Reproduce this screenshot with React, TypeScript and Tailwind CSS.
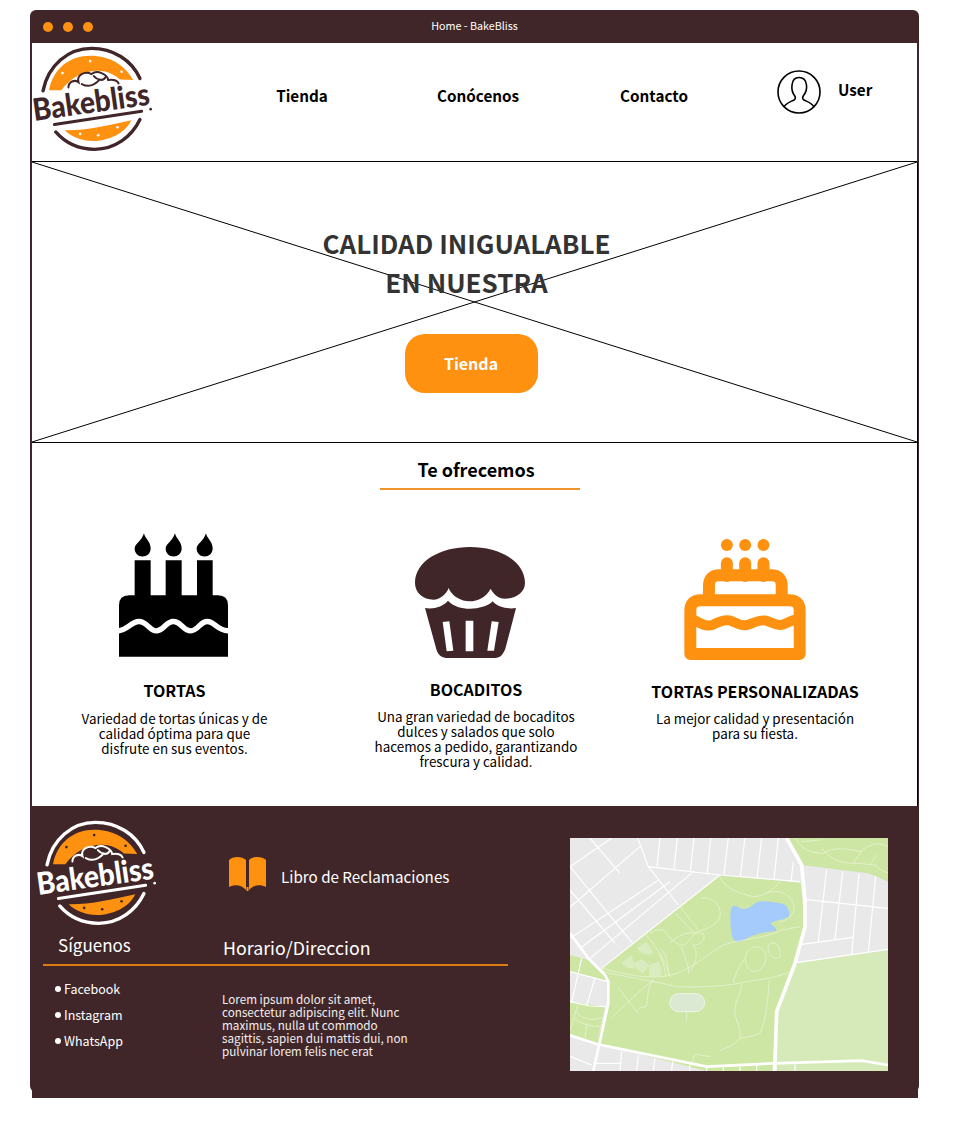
const brown = "#412629";
const orange = "#ff9110";

const Logo = ({ ring, text, dot, cloud }: { ring: string; text: string; dot: string; cloud: string }) => (
  <svg viewBox="40 135 365 320" className="w-[122px] h-[107px] shrink-0 overflow-visible">
    <path d="M88 270 C100 205 150 167 212 167 C270 167 315 195 340 240 L300 238 C285 225 262 212 235 212 C190 212 150 235 125 270 Z" fill={orange} />
    <path d="M135 390 C190 392 270 375 334 360 C315 400 265 422 220 422 C185 422 155 410 135 390 Z" fill={orange} />
    <path d="M70 272 C85 195 145 145 215 145 C280 145 335 180 360 235" fill="none" stroke={ring} strokeWidth="10" strokeLinecap="round" />
    <path d="M108 395 C140 432 180 447 225 447 C285 447 335 410 360 358" fill="none" stroke={ring} strokeWidth="10" strokeLinecap="round" />
    <path d="M146 262 C146 244 165 238 176 246 C170 225 195 212 215 222 C232 208 262 222 265 240 C280 236 293 242 296 250 M186 252 C205 262 225 255 240 238 M222 228 C232 240 250 244 256 232" fill="none" stroke={cloud} strokeWidth="6" strokeLinecap="round" />
    <circle cx="211" cy="183" r="4" fill={dot} />
    <circle cx="128" cy="219" r="4" fill={dot} />
    <circle cx="305" cy="215" r="4" fill={dot} />
    <circle cx="181" cy="401" r="4" fill={dot} />
    <circle cx="235" cy="405" r="4" fill={dot} />
    <circle cx="293" cy="381" r="4" fill={dot} />
    <text x="44" y="362" transform="rotate(-8 44 362)" fill={text} fontFamily="Lato, sans-serif" fontWeight="900" fontSize="92" textLength="352" lengthAdjust="spacingAndGlyphs">Bakebliss</text>
    <path d="M104 373 L365 333" stroke={ring} strokeWidth="9" strokeLinecap="round" />
    <circle cx="392" cy="327" r="4" fill={text} />
  </svg>
);

const UserIcon = () => (
  <svg viewBox="0 0 44 44" className="w-[44px] h-[44px] shrink-0" fill="none" stroke="black" strokeWidth="1.6">
    <circle cx="22" cy="22" r="21" />
    <path d="M7 37 C9 33 13 32 17 30 C18.500 29 18.500 27 17.500 25.500 C15.500 23 14.500 19 15 15 C15.500 10 18.500 7.500 22 7.500 C26 7.500 29 10 29.500 15 C30 19 28.500 23 26.500 25.500 C25.500 27 25.500 29 27 30 C31 32 35 33 37 37" />
  </svg>
);

const BlackCake = () => (
  <svg viewBox="55 27 327 371" className="w-[109px] h-[124px]">
    <path d="M55 243 Q55 213 85 213 H102 V108 H150 V213 H195 V108 H243 V213 H289 V108 H336 V213 H352 Q382 213 382 243 V398 H55 Z" fill="black" />
    <path d="M130 27 C132 42 150 50 150 73 C150 88 138 97 126 97 C112 97 102 87 102 73 C102 58 122 52 130 27 Z" fill="black" />
    <path d="M223 27 C225 42 243 50 243 73 C243 88 231 97 219 97 C205 97 195 87 195 73 C195 58 215 52 223 27 Z" fill="black" />
    <path d="M316 27 C318 42 336 50 336 73 C336 88 324 97 312 97 C298 97 288 87 288 73 C288 58 308 52 316 27 Z" fill="black" />
    <path d="M50 320 C80 320 90 292 115 292 S145 320 167 320 S195 292 218 292 S248 320 270 320 S298 292 320 292 S350 320 387 320" fill="none" stroke="white" strokeWidth="16" />
  </svg>
);

const Cupcake = () => (
  <svg viewBox="945 67 330 333" className="w-[110px] h-[111px]">
    <path d="M945 175 C945 110 1020 67 1110 67 C1200 67 1275 110 1275 175 C1275 205 1245 222 1215 222 C1195 222 1180 208 1172 192 C1160 215 1135 230 1108 230 C1085 230 1055 215 1046 190 C1040 208 1020 225 1000 225 C970 225 945 205 945 175 Z" fill={brown} />
    <path d="M975 250 C1000 255 1030 245 1044 228 C1060 245 1085 252 1110 252 C1135 252 1165 245 1178 230 C1190 245 1220 255 1248 250 L1218 365 C1212 390 1200 400 1185 400 H1040 C1025 400 1012 390 1008 370 Z" fill={brown} />
    <path d="M1028 292 L1048 290 L1060 378 L1040 380 Z M1097 288 H1120 V380 H1097 Z M1175 290 L1196 292 L1182 378 L1162 378 Z" fill="white" />
  </svg>
);

const OrangeCake = () => (
  <svg viewBox="42 39 365 364" className="w-[122px] h-[121px]" fill="none" stroke={orange}>
    <circle cx="170" cy="57" r="18" fill={orange} stroke="none" />
    <circle cx="225" cy="57" r="18" fill={orange} stroke="none" />
    <circle cx="280" cy="57" r="18" fill={orange} stroke="none" />
    <path d="M170 112 V150 M225 112 V150 M280 112 V150" strokeWidth="36" strokeLinecap="round" />
    <path d="M116 223 V180 Q116 148 148 148 H303 Q335 148 335 180 V223" strokeWidth="36" />
    <path d="M92 223 H357 Q389 223 389 255 V385 H60 V255 Q60 223 92 223 Z" strokeWidth="36" strokeLinejoin="round" />
    <path d="M70 282 C95 295 110 305 130 296 C150 285 165 282 178 284 C195 288 210 302 230 298 C250 292 265 282 285 284 C305 288 320 304 340 296 C350 292 360 286 380 280" strokeWidth="30" />
  </svg>
);

const BookIcon = () => (
  <svg viewBox="0 0 37 34" className="w-[37px] h-[34px]" fill={orange}>
    <path d="M0 3 C4 -1 13 -1 17 3 V33 C13 28 6 27 0 30 Z" />
    <path d="M37 3 C33 -1 24 -1 20 3 V33 C24 28 31 27 37 30 Z" />
    <path d="M17.500 30 H19.500 V34 H17.500 Z" />
  </svg>
);

const MapPicture = () => (
  <svg viewBox="30 24 954 699" className="w-[318px] h-[233px] shrink-0" fill="none">
    <rect x="30" y="24" width="954" height="699" fill="#e9e9e9" />
    <path d="M710 398 L984 360 V723 H650 V545 Z" fill="#d6e9b8" />
    <path d="M480 135 L722 158 L735 290 L705 400 L650 545 L637 723 H440 L110 640 L145 520 V450 L125 415 Z" fill="#cde6a4" />
    <path d="M680 24 H984 V155 L925 130 L725 105 Z" fill="#cde6a4" />
    <path d="M30 375 L85 390 L135 440 L145 455 L30 425 Z M30 515 L135 530 L110 640 L30 612 Z" fill="#cde6a4" />
    <path d="M512 240 C515 222 530 225 540 235 C555 240 570 235 585 220 C600 208 640 215 670 222 C685 228 692 250 685 262 C665 272 640 270 632 282 C640 290 650 292 648 303 C620 305 590 310 560 325 C540 340 525 340 518 325 C510 295 510 265 512 240 Z" fill="#a4cbfb" />
    <g fill="#d9ecc0">
      <path d="M185 398 L215 375 L225 415 C210 418 195 410 185 398 Z" />
      <path d="M231 355 L258 335 L280 368 C265 378 245 375 231 355 Z" />
      <path d="M222 400 L245 388 L268 405 L250 430 C235 425 225 415 222 400 Z" />
      <path d="M267 405 L298 394 L306 434 C295 440 280 440 267 440 Z" />
    </g>
    <rect x="329" y="491" width="105" height="54" rx="27" fill="#dbe9d3" stroke="#f3f7ea" strokeWidth="2.500" />
    <g stroke="#eef5dd" strokeWidth="2">
      <path d="M125 415 C170 425 230 445 300 440 C380 435 430 380 490 345 C550 325 620 325 665 300 L720 290" />
      <path d="M130 425 C190 440 270 450 350 470 C420 472 500 470 560 455 C610 448 660 440 690 425" />
      <path d="M480 140 C490 170 530 190 580 200 C610 200 640 180 660 155 M620 190 C650 175 690 190 702 225 C705 250 690 270 660 275" />
      <path d="M425 205 C460 200 485 225 480 260 C470 290 430 300 410 305 L380 340 C360 355 340 330 325 320 C320 300 300 290 270 310" />
      <path d="M330 340 C370 300 395 310 430 310 C440 330 420 345 400 345 C420 380 400 410 385 430" />
      <path d="M365 350 C370 380 390 410 385 430 M300 355 C330 380 320 420 330 440 M296 370 C310 390 315 420 318 442" />
      <path d="M590 350 C625 355 625 400 600 420 C575 435 555 410 556 385 C558 365 570 352 590 350 Z" />
      <path d="M625 345 C650 325 665 360 660 380 C640 395 620 370 625 345 Z" />
      <path d="M545 460 C545 490 520 520 525 550 C530 580 545 600 540 625 C520 650 490 655 478 663" />
      <path d="M628 450 C625 490 620 570 600 610 C580 620 560 620 540 625" />
      <path d="M172 470 L235 550 M155 563 C190 530 240 480 280 450 C260 470 265 510 258 530 L235 535 M380 545 V572" />
      <path d="M395 698 L405 673 L452 680 M555 385 C530 420 525 440 520 458" />
      <path d="M360 230 L415 300 M345 250 L400 305 M258 315 C290 350 320 400 330 442" />
      <path d="M708 24 C720 60 760 70 790 70 C820 50 860 55 900 65 C930 40 960 35 984 50 M725 35 L780 30 M785 55 C800 75 830 100 880 100 C890 85 900 70 905 65 M880 100 C910 100 930 105 950 105 M950 75 L930 105 M984 130 C960 120 950 110 945 105" />
      <path d="M50 545 C70 575 110 570 135 560 M40 565 C70 585 100 590 125 590 M80 580 L75 625 M55 520 L30 600" />
    </g>
    <g stroke="white" strokeWidth="3.500" strokeLinecap="butt">
      <path d="M90 24 L180 130 M155 24 L30 110 M240 50 L30 232 M296 150 L30 325 M330 155 L60 355 M400 125 L90 385" />
      <path d="M30 110 L218 340 M30 180 L165 340 M265 110 L355 225 M233 24 L265 110 L480 135 L720 155" />
      <path d="M300 24 L291 110 M352 24 L342 118 M402 24 L391 125 M452 24 L442 128 M505 24 L492 133 M555 24 L541 138 M605 24 L591 143 M655 24 L642 148 M700 95 L693 155" />
      <path d="M800 118 L775 335 M848 125 L825 328 M897 130 L875 372 M947 138 L925 366 M735 208 L984 235 M725 343 L878 322 M710 398 L984 358" />
      <path d="M125 415 L480 135 M65 385 L35 515 M105 445 L80 525 M30 425 L145 455 M30 515 L90 528 L140 530" />
      <path d="M30 680 L95 705 M100 700 H180 M185 665 L180 723 M235 675 L230 723 M285 685 L280 723 M338 695 L335 723 M390 705 L388 723 M440 710 V723 M490 710 V723 M540 710 V723 M590 705 V723 M705 700 V723" />
    </g>
    <g stroke="white" strokeLinejoin="round">
      <path d="M680 24 L725 105 L735 210 L735 290 L705 400 L650 545 L644 723" strokeWidth="11" />
      <path d="M30 310 L85 385 L135 435 L145 455 L145 520 L100 723" strokeWidth="8" />
      <path d="M30 616 L110 642 L440 710 L640 700 L905 692 L984 705" strokeWidth="8" />
    </g>
  </svg>
);

const App = () => {
  return (
    <div className="pt-[10px] pl-[30px] pb-[23px] w-[967px] text-black [font-family:'Noto_Sans_CJK_SC','Noto_Sans',sans-serif]">
      <div className="w-[889px] bg-[#412629] rounded-t-[6px] rounded-b-[6px] h-[1082px]">
        {/* Title bar */}
        <div className="h-[33px] flex items-center pl-[13px]">
          <div className="flex gap-[10px]">
            <span className="w-[10px] h-[10px] rounded-full bg-[#ff9110]"></span>
            <span className="w-[10px] h-[10px] rounded-full bg-[#ff9110]"></span>
            <span className="w-[10px] h-[10px] rounded-full bg-[#ff9110]"></span>
          </div>
          <p className="flex-1 text-center text-white text-[10.75px] pr-[63px]">Home - BakeBliss</p>
        </div>

        <div className="ml-[2px] w-[886px]">
          {/* Header */}
          <header className="h-[119px] mr-px bg-white border-b border-black flex items-center">
            <div className="-mt-[7px] ml-px">
              <Logo ring={brown} text={brown} dot="white" cloud={brown} />
            </div>
            <nav className="ml-[59px] w-[528px] grid grid-cols-3 text-center text-[15.25px] font-bold -mt-[13px]">
              <a>Tienda</a>
              <a>Conócenos</a>
              <a>Contacto</a>
            </nav>
            <div className="ml-[35px] flex items-center gap-[17px] -mt-[21px]">
              <UserIcon />
              <span className="text-[15.25px] font-bold -mt-[4px]">User</span>
            </div>
          </header>

          {/* Hero */}
          <section className="relative h-[281px] bg-white border-b border-r border-black flex flex-col items-center pt-[61px]">
            <svg className="absolute inset-0 w-full h-full" viewBox="0 0 885 280" preserveAspectRatio="none">
              <path d="M0 0 L885 280 M885 0 L0 280" stroke="black" strokeWidth="1" />
            </svg>
            <h1 className="relative pr-[16px] text-center text-[26px] leading-[39px] font-bold text-[#333333]">
              CALIDAD INIGUALABLE
              <br />
              EN NUESTRA
            </h1>
            <button className="relative mt-[33px] mr-[7px] pb-[2px] w-[133px] h-[59px] rounded-[20px] bg-[#ff9110] text-white text-[16px] font-bold">
              Tienda
            </button>
          </section>

          {/* Te ofrecemos */}
          <section className="h-[363px] bg-white border-r border-black flex flex-col">
            <div className="flex flex-col items-center pt-[12px] pl-[10px]">
              <h2 className="-ml-[7px] text-[18px] leading-[28px] font-bold">Te ofrecemos</h2>
              <div className="w-[200px] h-[2px] bg-[#f0932b] mt-[5px]"></div>
            </div>
            <div className="grid grid-cols-[285px_318px_240px] mt-[42px]">
              <div className="flex flex-col items-center">
                <div className="mt-px -ml-[2px]">
                  <BlackCake />
                </div>
                <h3 className="mt-[22px] text-[16px] leading-[22px] font-bold">TORTAS</h3>
                <p className="mt-[10px] text-[13.4px] leading-[15px] text-center whitespace-nowrap">
                  Variedad de tortas únicas y de
                  <br />
                  calidad óptima para que
                  <br />
                  disfrute en sus eventos.
                </p>
              </div>
              <div className="flex flex-col items-center">
                <div className="mt-[15px] -ml-[12px]">
                  <Cupcake />
                </div>
                <h3 className="mt-[20px] text-[16px] leading-[22px] font-bold">BOCADITOS</h3>
                <p className="mt-[9px] text-[13.4px] leading-[15px] text-center whitespace-nowrap">
                  Una gran variedad de bocaditos
                  <br />
                  dulces y salados que solo
                  <br />
                  hacemos a pedido, garantizando
                  <br />
                  frescura y calidad.
                </p>
              </div>
              <div className="flex flex-col items-center">
                <div className="mt-[7px] -ml-[20px]">
                  <OrangeCake />
                </div>
                <h3 className="mt-[20px] text-[16px] leading-[22px] font-bold whitespace-nowrap">TORTAS PERSONALIZADAS</h3>
                <p className="mt-[9px] text-[13.4px] leading-[15px] text-center whitespace-nowrap">
                  La mejor calidad y presentación
                  <br />
                  para su fiesta.
                </p>
              </div>
            </div>
          </section>

          {/* Footer */}
          <footer className="h-[292px] bg-[#412629] flex text-white">
            <div className="w-[538px] pl-[11px] pt-[13px]">
              <div className="flex items-center -ml-[6px]">
                <Logo ring="white" text="white" dot={brown} cloud="white" />
                <div className="ml-[70px] mt-[2px] flex items-center gap-[15px]">
                  <BookIcon />
                  <span className="text-[15.2px] pt-[6px] whitespace-nowrap">Libro de Reclamaciones</span>
                </div>
              </div>
              <div className="w-[465px] border-b-2 border-[#dd7a12] flex items-end pb-[3px] pt-[6px]">
                <span className="ml-[15px] w-[165px] text-[17px] leading-[26px] mb-[3px]">Síguenos</span>
                <span className="text-[17.8px] leading-[28px]">Horario/Direccion</span>
              </div>
              <div className="flex mt-[14px]">
                <ul className="w-[179px] pl-[12px] flex flex-col gap-[8px] text-[12.5px] leading-[18px]">
                  <li className="flex items-center gap-[3px]"><span className="w-[6px] h-[6px] rounded-full bg-white"></span>Facebook</li>
                  <li className="flex items-center gap-[3px]"><span className="w-[6px] h-[6px] rounded-full bg-white"></span>Instagram</li>
                  <li className="flex items-center gap-[3px]"><span className="w-[6px] h-[6px] rounded-full bg-white"></span>WhatsApp</li>
                </ul>
                <p className="mt-[12px] text-[11.7px] leading-[13px] text-[#f2eeee] whitespace-nowrap">
                  Lorem ipsum dolor sit amet,
                  <br />
                  consectetur adipiscing elit. Nunc
                  <br />
                  maximus, nulla ut commodo
                  <br />
                  sagittis, sapien dui mattis dui, non
                  <br />
                  pulvinar lorem felis nec erat
                </p>
              </div>
            </div>
            <div className="pt-[32px]">
              <MapPicture />
            </div>
          </footer>
        </div>
      </div>
    </div>
  );
};

export default App;
